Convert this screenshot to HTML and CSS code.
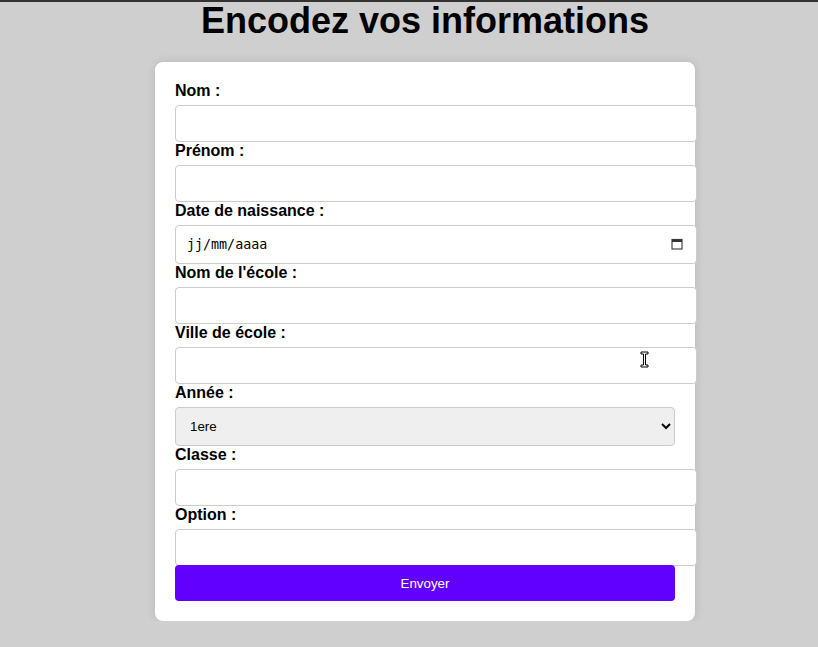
FILE: index.html
```html
<!DOCTYPE html>
<html lang="fr">
<head>
<meta charset="utf-8">
<title>Encodez vos informations</title>
<link rel="stylesheet" href="styles.css">
</head>
<body>
<div class="topline"></div>
<h1 class="title">Encodez vos informations</h1>
<form class="card">
  <label class="lbl" for="nom">Nom :</label>
  <input class="field" type="text" id="nom">
  <label class="lbl" for="prenom">Prénom :</label>
  <input class="field" type="text" id="prenom">
  <label class="lbl" for="date">Date de naissance :</label>
  <div class="datewrap">
    <input class="field datefield" type="text" id="date" value="jj/mm/aaaa">
    <svg class="calicon" width="12" height="12" viewBox="0 0 12 12"><rect x="1" y="1.5" width="10" height="9.5" fill="none" stroke="#444" stroke-width="1.2"/><rect x="1" y="1.5" width="10" height="2.5" fill="#333"/></svg>
  </div>
  <label class="lbl" for="ecole">Nom de l'école :</label>
  <input class="field" type="text" id="ecole">
  <label class="lbl" for="ville">Ville de école :</label>
  <input class="field" type="text" id="ville">
  <label class="lbl" for="annee">Année :</label>
  <select class="sel" id="annee">
    <option>1ere</option>
    <option>2eme</option>
    <option>3eme</option>
  </select>
  <label class="lbl" for="classe">Classe :</label>
  <input class="field" type="text" id="classe">
  <label class="lbl" for="option">Option :</label>
  <input class="field" type="text" id="option">
  <button class="btn" type="button">Envoyer</button>
</form>
<svg class="cursor" width="9" height="17" viewBox="0 0 9 17"><path d="M1 1h7v2H5.5v11H8v2H1v-2h2.5V3H1z" fill="#fff" stroke="#000" stroke-width="1"/></svg>
</body>
</html>
```
FILE: styles.css
```css
html, body {
  margin: 0;
  padding: 0;
}
body {
  background: #cfcfcf;
  font-family: "Liberation Sans", Arial, sans-serif;
  color: #000;
  padding-left: 32px;
}
.topline {
  position: fixed;
  top: 0;
  left: 0;
  right: 0;
  height: 2px;
  background: #333;
}
.title {
  margin: 0 0 21px;
  font-size: 36px;
  line-height: 41px;
  text-align: center;
  font-weight: bold;
}
.card {
  width: 500px;
  margin: 0 auto;
  padding: 20px;
  background: #fff;
  border-radius: 8px;
  box-shadow: 0 0 10px rgba(0, 0, 0, 0.12);
  display: flex;
  flex-direction: column;
  align-items: flex-start;
}
.lbl {
  display: block;
  font-size: 16px;
  line-height: 18px;
  font-weight: bold;
  margin-bottom: 5px;
}
.field {
  box-sizing: content-box;
  width: 100%;
  height: 15px;
  padding: 10px;
  margin: 0;
  border: 1px solid #ccc;
  border-radius: 4px;
  font: 13.33px "Liberation Sans", Arial, sans-serif;
  background: #fff;
  outline: none;
}
.datewrap {
  position: relative;
  width: 100%;
}
.datefield {
  height: 17px;
  font-family: "DejaVu Sans Mono", "Liberation Mono", monospace;
  font-size: 13.33px;
  color: #000;
  padding-left: 11px;
  padding-right: 9px;
}
.calicon {
  position: absolute;
  right: -8px;
  top: 13px;
}
.sel {
  box-sizing: border-box;
  width: 100%;
  height: 39px;
  padding: 10px;
  margin: 0;
  border: 1px solid #ccc;
  border-radius: 4px;
  background: #efefef;
  font: 13.33px "Liberation Sans", Arial, sans-serif;
  color: #000;
}
.btn {
  box-sizing: border-box;
  width: 100%;
  height: 36px;
  margin: -1px 0 0;
  border: none;
  border-radius: 4px;
  background: #6200ff;
  color: #fff;
  font: 13.33px "Liberation Sans", Arial, sans-serif;
  cursor: pointer;
}
.cursor {
  position: absolute;
  left: 640px;
  top: 351px;
}
```
